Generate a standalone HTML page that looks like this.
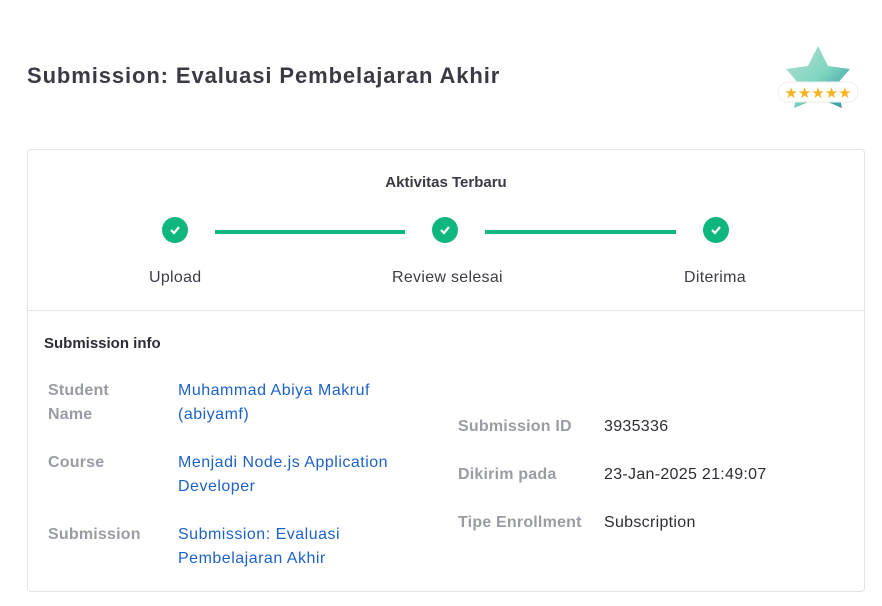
<!DOCTYPE html>
<html><head><style>
body{margin:0;width:882px;height:606px;background:#fff;font-family:"Liberation Sans",sans-serif;position:relative;overflow:hidden}
.a{position:absolute;white-space:nowrap}
h1{position:absolute;left:27px;top:63px;margin:0;font-size:22px;font-weight:bold;color:#3a3a44;letter-spacing:0.9px}
.card{position:absolute;left:27px;top:149px;width:836px;height:441px;border:1px solid #e2e3e6;border-radius:4px}
.c{position:absolute;width:26px;height:26px;border-radius:50%;background:#0fb67d}
.c svg{position:absolute;left:7px;top:8px}
.ln{position:absolute;height:4px;background:#0fb67d;top:230px}
.lab{font-size:16px;color:#3d3d47;letter-spacing:0.3px}
.k{font-size:16px;color:#9a9ca4;font-weight:bold;letter-spacing:0.2px}
.v{font-size:16px;color:#1d62c7;line-height:24px;letter-spacing:0.5px}
.t{font-size:16px;color:#2d2d35;letter-spacing:0.3px}
</style></head><body>
<h1>Submission: Evaluasi Pembelajaran Akhir</h1>
<svg class="a" style="left:776px;top:44px" width="86" height="66" viewBox="0 0 86 66">
<defs><linearGradient id="g" x1="0" y1="0" x2="1" y2="1"><stop offset="0" stop-color="#b9dcd6"/><stop offset=".5" stop-color="#7fd6c0"/><stop offset="1" stop-color="#2a8fa0"/></linearGradient></defs>
<path d="M42 2 L52 22 L74 25 L61 40 L66 64 L42 54 L18 64 L23 40 L10 25 L32 22Z" fill="url(#g)" stroke-linejoin="round"/>
<rect x="2" y="38" width="80" height="20" rx="10" fill="#fff" stroke="#eee"/>
<text x="42" y="54" font-size="15" fill="#f7b321" text-anchor="middle" font-family="DejaVu Sans">★★★★★</text>
</svg>
<div class="card"></div>
<div class="a" style="left:0;width:892px;text-align:center;top:174px;font-size:15px;font-weight:bold;color:#3a3a44">Aktivitas Terbaru</div>
<div class="c" style="left:162px;top:217px"><svg width="12" height="10"><path d="M2 5 L5 8 L10 2" stroke="#fff" stroke-width="2.2" fill="none"/></svg></div>
<div class="c" style="left:432px;top:217px"><svg width="12" height="10"><path d="M2 5 L5 8 L10 2" stroke="#fff" stroke-width="2.2" fill="none"/></svg></div>
<div class="c" style="left:703px;top:217px"><svg width="12" height="10"><path d="M2 5 L5 8 L10 2" stroke="#fff" stroke-width="2.2" fill="none"/></svg></div>
<div class="ln" style="left:215px;width:190px"></div>
<div class="ln" style="left:485px;width:191px"></div>
<div class="a lab" style="left:149px;top:269px">Upload</div>
<div class="a lab" style="left:392px;top:269px">Review selesai</div>
<div class="a lab" style="left:684px;top:269px">Diterima</div>
<div class="a" style="left:28px;top:310px;width:836px;height:1px;background:#e2e3e6"></div>
<div class="a" style="left:44px;top:335px;font-size:15px;font-weight:bold;color:#2d2d35">Submission info</div>
<div class="a k" style="left:48px;top:379px;line-height:24px">Student<br>Name</div>
<div class="a v" style="left:178px;top:379px">Muhammad Abiya Makruf<br>(abiyamf)</div>
<div class="a k" style="left:48px;top:451px;line-height:24px">Course</div>
<div class="a v" style="left:178px;top:451px">Menjadi Node.js Application<br>Developer</div>
<div class="a k" style="left:48px;top:523px;line-height:24px">Submission</div>
<div class="a v" style="left:178px;top:523px">Submission: Evaluasi<br>Pembelajaran Akhir</div>
<div class="a k" style="left:458px;top:415px;line-height:24px">Submission ID</div>
<div class="a t" style="left:604px;top:415px;line-height:24px">3935336</div>
<div class="a k" style="left:458px;top:463px;line-height:24px">Dikirim pada</div>
<div class="a t" style="left:604px;top:463px;line-height:24px">23-Jan-2025 21:49:07</div>
<div class="a k" style="left:458px;top:511px;line-height:24px">Tipe Enrollment</div>
<div class="a t" style="left:604px;top:511px;line-height:24px">Subscription</div>
</body></html>
